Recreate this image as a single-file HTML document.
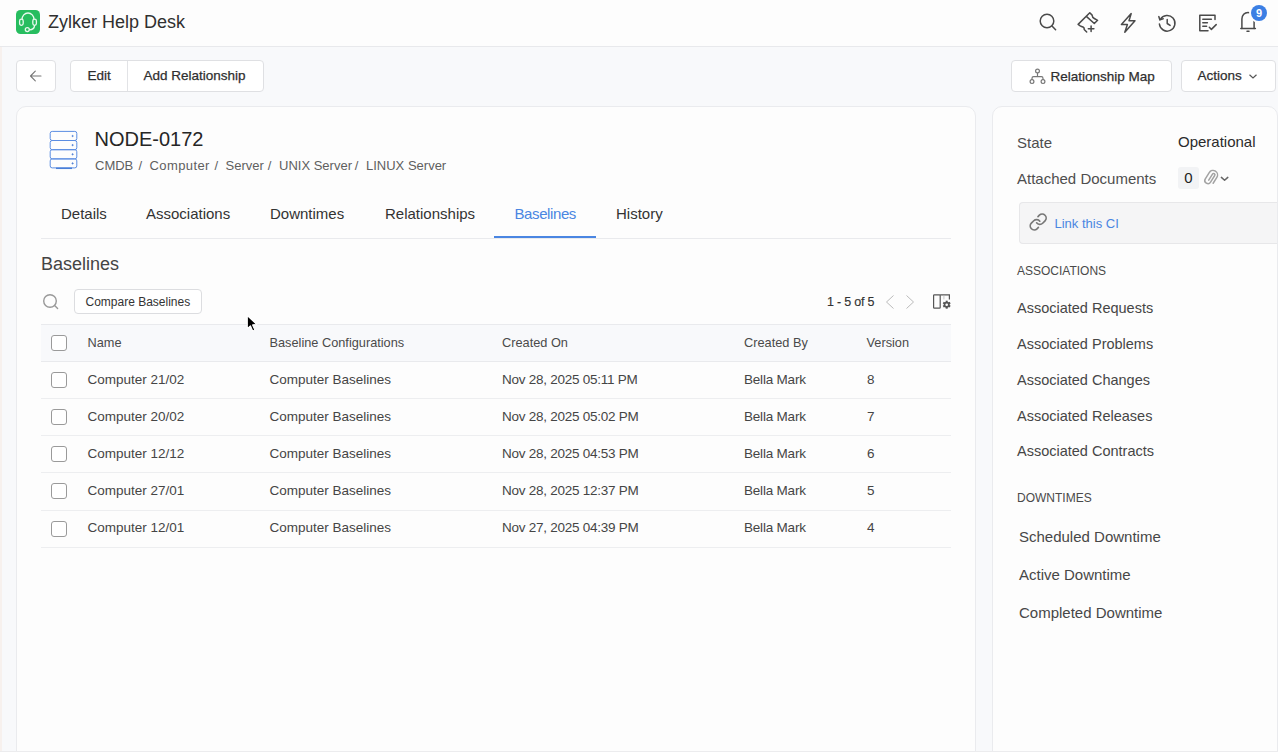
<!DOCTYPE html>
<html><head><meta charset="utf-8">
<style>
*{box-sizing:border-box;margin:0;padding:0}
html,body{width:1278px;height:752px;overflow:hidden}
body{background:#f8f9fb;font-family:"Liberation Sans",sans-serif;color:#333;position:relative}
.a{position:absolute;white-space:nowrap;line-height:1}
#hdr{position:absolute;left:0;top:0;width:1278px;height:47px;background:#fdfdfd;border-bottom:1px solid #e8e9ec}
.btn{position:absolute;background:#fff;border:1px solid #dfe0e3;border-radius:4px}
.bt{-webkit-text-stroke:0.25px #2f2f2f}
.card{position:absolute;background:#fdfdfd;border:1px solid #eaebee;border-radius:10px}
.ic{position:absolute;overflow:visible}
</style></head><body>
<div id="hdr"></div>
<!-- left strip -->
<div class="a" style="left:0;top:47px;width:2px;height:705px;background:#f7f1ee"></div>

<!-- logo -->
<svg class="ic" style="left:16px;top:10px" width="24" height="24" viewBox="0 0 24 24">
<rect x="0" y="0" width="24" height="24" rx="4.5" fill="#27bd5f"/>
<path d="M6 9.5 A6 6.5 0 0 1 18 9.5" fill="none" stroke="#e9f9ee" stroke-width="1.3"/>
<rect x="3.6" y="9.2" width="3.6" height="6.2" rx="1.8" fill="none" stroke="#e9f9ee" stroke-width="1.3"/>
<rect x="16.8" y="9.2" width="3.6" height="6.2" rx="1.8" fill="none" stroke="#e9f9ee" stroke-width="1.3"/>
<path d="M18.6 15.4 Q18.2 19.8 13.6 19.8" fill="none" stroke="#e9f9ee" stroke-width="1.3"/>
<circle cx="11.3" cy="19.6" r="2" fill="none" stroke="#e9f9ee" stroke-width="1.3"/>
</svg>
<div class="a" style="left:48px;top:13.1px;font-size:18px;color:#303030">Zylker Help Desk</div>

<!-- header icons -->
<svg class="ic" style="left:1034px;top:8px" width="28" height="28" viewBox="0 0 28 28" fill="none" stroke="#4a4a4a" stroke-width="1.5" stroke-linecap="round">
<circle cx="13" cy="13" r="6.8"/><path d="M18 18 L21.6 21.8"/>
</svg>
<svg class="ic" style="left:1074px;top:8px" width="28" height="28" viewBox="0 0 28 28" fill="none" stroke="#4a4a4a" stroke-width="1.5" stroke-linejoin="round" stroke-linecap="round">
<path d="M12.7 24 L10.2 21.5 Q10.7 19.9 9 19 Q7.4 18.6 6.2 17.9 L4.1 16.4 L15.8 4.8 L18.1 7.1 Q18.3 9.4 20.3 10.5 L23.6 12.3 L20.3 15.5 L12.9 8.9"/>
<path d="M17.1 18 V23.4 M14.3 20.7 H19.9"/>
</svg>
<svg class="ic" style="left:1116px;top:11px" width="24" height="24" viewBox="0 0 24 24" fill="none" stroke="#4a4a4a" stroke-width="1.5" stroke-linejoin="round">
<path d="M15.2 2.6 L5.4 13.4 L11.4 13.4 L8.8 21.2 L19 9.8 L13 9.8 Z"/>
</svg>
<svg class="ic" style="left:1155px;top:11px" width="24" height="24" viewBox="0 0 24 24" fill="none" stroke="#4a4a4a" stroke-width="1.5" stroke-linecap="round" stroke-linejoin="round">
<path d="M5.4 8.4 A7.8 7.8 0 1 1 4.4 13"/><path d="M3.8 5.6 L4.9 8.9 L8.2 7.8"/><path d="M12.2 8.4 V12.5 L15.1 14.4"/>
</svg>
<svg class="ic" style="left:1196px;top:11px" width="24" height="24" viewBox="0 0 24 24" fill="none" stroke="#4a4a4a" stroke-width="1.5" stroke-linecap="round" stroke-linejoin="round">
<path d="M19 8.6 V4.2 H3.8 V19.8 H12"/><path d="M6.8 8.2 H15.4 M6.8 11.8 H11.4 M6.8 15.2 H10.6"/><path d="M13.3 16.3 L15.4 18.4 L20.2 13.6"/>
</svg>
<svg class="ic" style="left:1234px;top:2px" width="40" height="36" viewBox="0 0 40 36" fill="none" stroke="#4a4a4a" stroke-width="1.5" stroke-linecap="round" stroke-linejoin="round">
<path d="M7.9 26.6 V17 A6.1 6.6 0 0 1 20.1 17 V26.6"/><path d="M6.8 26.6 H21.4"/><path d="M13 29.2 H15"/>
</svg>
<div class="a" style="left:1251px;top:5px;width:16px;height:16px;border-radius:50%;background:#3b7fe4;color:#fff;font-size:11px;font-weight:bold;line-height:16px;text-align:center;box-shadow:0 0 0 2px #fdfdfd">9</div>

<!-- toolbar -->
<div class="btn" style="left:16px;top:60px;width:40px;height:32px"></div>
<svg class="ic" style="left:28px;top:68px" width="16" height="16" viewBox="0 0 16 16" fill="none" stroke="#777" stroke-width="1.1" stroke-linecap="round" stroke-linejoin="round">
<path d="M13 8 H2.5 M7.3 3.2 L2.5 8 L7.3 12.8"/>
</svg>
<div class="btn" style="left:70px;top:60px;width:194px;height:32px"></div>
<div class="a" style="left:126.5px;top:61px;width:1px;height:30px;background:#e2e3e6"></div>
<div class="a bt" style="left:87.5px;top:69px;font-size:13.5px;color:#2f2f2f">Edit</div>
<div class="a bt" style="left:143.5px;top:69px;font-size:13.5px;color:#2f2f2f">Add Relationship</div>

<div class="btn" style="left:1011px;top:60px;width:161px;height:32px"></div>
<svg class="ic" style="left:1029px;top:68px" width="17" height="17" viewBox="0 0 17 17" fill="none" stroke="#777" stroke-width="1.2">
<circle cx="8.5" cy="3" r="1.9"/><circle cx="3" cy="13.6" r="1.9"/><circle cx="14" cy="13.6" r="1.9"/>
<path d="M8.5 4.9 V8.6 M3 11.7 V10.2 Q3 8.6 4.6 8.6 H12.4 Q14 8.6 14 10.2 V11.7"/>
</svg>
<div class="a bt" style="left:1050.5px;top:69.5px;font-size:13.5px;color:#2f2f2f">Relationship Map</div>
<div class="btn" style="left:1181px;top:60px;width:95px;height:32px"></div>
<div class="a bt" style="left:1197.5px;top:69px;font-size:13.5px;color:#2f2f2f">Actions</div>
<svg class="ic" style="left:1248px;top:73px" width="10" height="7" viewBox="0 0 10 7" fill="none" stroke="#555" stroke-width="1.2">
<path d="M1.5 1.8 L5 5 L8.5 1.8"/>
</svg>

<!-- main card -->
<div class="card" style="left:16px;top:106px;width:960px;height:700px"></div>
<!-- right card -->
<div class="card" style="left:992px;top:106px;width:286px;height:700px"></div>

<!-- server icon -->
<svg class="ic" style="left:49px;top:130px" width="30" height="40" viewBox="0 0 30 40" fill="none" stroke="#5b8de2" stroke-width="1">
<rect x="1.2" y="1.4" width="26.6" height="9.1" rx="2"/>
<rect x="1.2" y="10.5" width="26.6" height="9.2" rx="2"/>
<rect x="1.2" y="19.7" width="26.6" height="9.2" rx="2"/>
<rect x="1.2" y="28.9" width="26.6" height="9" rx="2"/>
<path d="M7 38.3 H23" stroke-width="1.5" stroke="#4a7fd8"/>
<circle cx="23.6" cy="6" r="0.6" fill="#3f5f9f"/><circle cx="23.6" cy="15.1" r="0.6" fill="#3f5f9f"/><circle cx="23.6" cy="24.3" r="0.6" fill="#3f5f9f"/><circle cx="23.6" cy="33.4" r="0.6" fill="#3f5f9f"/>
</svg>
<div class="a" style="left:94.5px;top:128.8px;font-size:20px;color:#262626">NODE-0172</div>
<div class="a" style="left:95px;top:159px;font-size:13px;color:#5f5f5f">CMDB</div><div class="a" style="left:138.4px;top:159px;font-size:13px;color:#5f5f5f">/</div><div class="a" style="left:149.5px;top:159px;font-size:13px;color:#5f5f5f;letter-spacing:0.4px">Computer</div><div class="a" style="left:214.5px;top:159px;font-size:13px;color:#5f5f5f">/</div><div class="a" style="left:225.5px;top:159px;font-size:13px;color:#5f5f5f">Server</div><div class="a" style="left:267.7px;top:159px;font-size:13px;color:#5f5f5f">/</div><div class="a" style="left:279px;top:159px;font-size:13px;color:#5f5f5f">UNIX Server</div><div class="a" style="left:354.7px;top:159px;font-size:13px;color:#5f5f5f">/</div><div class="a" style="left:366px;top:159px;font-size:13px;color:#5f5f5f">LINUX Server</div>
<!-- tabs -->
<div class="a" style="left:61px;top:206px;font-size:15px;color:#333">Details</div>
<div class="a" style="left:146px;top:206px;font-size:15px;color:#333">Associations</div>
<div class="a" style="left:270px;top:206px;font-size:15px;color:#333">Downtimes</div>
<div class="a" style="left:385px;top:206px;font-size:15px;color:#333">Relationships</div>
<div class="a" style="left:514.5px;top:206px;font-size:15px;color:#4a86e2;letter-spacing:-0.4px">Baselines</div>
<div class="a" style="left:616px;top:206px;font-size:15px;color:#333">History</div>
<div class="a" style="left:41px;top:238px;width:910px;height:1px;background:#e9eaed"></div>
<div class="a" style="left:494px;top:236px;width:102px;height:2px;background:#4a86e2"></div>

<div class="a" style="left:41px;top:255px;font-size:18px;color:#444">Baselines</div>
<svg class="ic" style="left:41px;top:292px" width="20" height="20" viewBox="0 0 20 20" fill="none" stroke="#999" stroke-width="1.4" stroke-linecap="round">
<circle cx="9" cy="9" r="6.3"/><path d="M13.6 13.6 L16.6 16.4"/>
</svg>
<div class="btn" style="left:74px;top:289px;width:128px;height:25px;border-radius:4px;border-color:#dcdde0"></div>
<div class="a" style="left:85.5px;top:295.5px;font-size:12px;color:#333">Compare Baselines</div>

<div class="a" style="left:827px;top:295.5px;font-size:12.5px;color:#333;letter-spacing:-0.2px;-webkit-text-stroke:0.15px #333">1 - 5 of 5</div>
<svg class="ic" style="left:884px;top:294px" width="32" height="16" viewBox="0 0 32 16" fill="none" stroke="#bbb" stroke-width="1">
<path d="M9.5 1.5 L2.5 8 L9.5 14.5 M22.5 1.5 L29.5 8 L22.5 14.5"/>
</svg>
<svg class="ic" style="left:930px;top:291px" width="24" height="20" viewBox="0 0 24 20" fill="none" stroke="#555" stroke-width="1.2">
<rect x="3.6" y="3.8" width="6.6" height="13.4" rx="0.8"/><path d="M10.2 3.8 H19.4 V8.6"/><path d="M13.9 4.4 V8.4" stroke="#bbb" stroke-width="0.8"/>
<g transform="translate(16.7,13.7)" fill="#555" stroke="none">
<rect x="-1" y="-4" width="2" height="8"/><rect x="-1" y="-4" width="2" height="8" transform="rotate(60)"/><rect x="-1" y="-4" width="2" height="8" transform="rotate(120)"/>
<circle r="3"/><circle r="1.3" fill="#fdfdfc"/></g>
</svg>

<!-- table -->
<div class="a" style="left:41px;top:324px;width:910px;height:38px;background:#f8f9fb;border-top:1px solid #e9eaed;border-bottom:1px solid #e9eaed"></div>
<div class="a" style="left:51px;top:335px;width:16px;height:16px;border:1.2px solid #9a9a9a;border-radius:3px;background:#fff"></div>
<div class="a" style="left:87.5px;top:337px;font-size:12.75px;color:#4a4a4a">Name</div>
<div class="a" style="left:269.5px;top:337px;font-size:12.75px;color:#4a4a4a">Baseline Configurations</div>
<div class="a" style="left:502px;top:337px;font-size:12.75px;color:#4a4a4a">Created On</div>
<div class="a" style="left:744px;top:337px;font-size:12.75px;color:#4a4a4a">Created By</div>
<div class="a" style="left:866.5px;top:337px;font-size:12.75px;color:#4a4a4a">Version</div>
<div class="a" style="left:41px;top:398.0px;width:910px;height:1px;background:#edeef0"></div>
<div class="a" style="left:51px;top:371.7px;width:16px;height:16px;border:1.2px solid #9a9a9a;border-radius:3px;background:#fff"></div>
<div class="a" style="left:87.5px;top:373.1px;font-size:13.5px;color:#454545">Computer 21/02</div>
<div class="a" style="left:269.5px;top:373.1px;font-size:13.5px;color:#454545">Computer Baselines</div>
<div class="a" style="left:502px;top:373.1px;font-size:13.5px;color:#454545;letter-spacing:-0.25px">Nov 28, 2025 05:11 PM</div>
<div class="a" style="left:744px;top:373.1px;font-size:13.5px;color:#454545;letter-spacing:-0.2px">Bella Mark</div>
<div class="a" style="left:867px;top:373.1px;font-size:13.5px;color:#454545">8</div>
<div class="a" style="left:41px;top:435.2px;width:910px;height:1px;background:#edeef0"></div>
<div class="a" style="left:51px;top:408.9px;width:16px;height:16px;border:1.2px solid #9a9a9a;border-radius:3px;background:#fff"></div>
<div class="a" style="left:87.5px;top:410.1px;font-size:13.5px;color:#454545">Computer 20/02</div>
<div class="a" style="left:269.5px;top:410.1px;font-size:13.5px;color:#454545">Computer Baselines</div>
<div class="a" style="left:502px;top:410.1px;font-size:13.5px;color:#454545;letter-spacing:-0.25px">Nov 28, 2025 05:02 PM</div>
<div class="a" style="left:744px;top:410.1px;font-size:13.5px;color:#454545;letter-spacing:-0.2px">Bella Mark</div>
<div class="a" style="left:867px;top:410.1px;font-size:13.5px;color:#454545">7</div>
<div class="a" style="left:41px;top:472.4px;width:910px;height:1px;background:#edeef0"></div>
<div class="a" style="left:51px;top:446.1px;width:16px;height:16px;border:1.2px solid #9a9a9a;border-radius:3px;background:#fff"></div>
<div class="a" style="left:87.5px;top:447.1px;font-size:13.5px;color:#454545">Computer 12/12</div>
<div class="a" style="left:269.5px;top:447.1px;font-size:13.5px;color:#454545">Computer Baselines</div>
<div class="a" style="left:502px;top:447.1px;font-size:13.5px;color:#454545;letter-spacing:-0.25px">Nov 28, 2025 04:53 PM</div>
<div class="a" style="left:744px;top:447.1px;font-size:13.5px;color:#454545;letter-spacing:-0.2px">Bella Mark</div>
<div class="a" style="left:867px;top:447.1px;font-size:13.5px;color:#454545">6</div>
<div class="a" style="left:41px;top:509.6px;width:910px;height:1px;background:#edeef0"></div>
<div class="a" style="left:51px;top:483.3px;width:16px;height:16px;border:1.2px solid #9a9a9a;border-radius:3px;background:#fff"></div>
<div class="a" style="left:87.5px;top:484.1px;font-size:13.5px;color:#454545">Computer 27/01</div>
<div class="a" style="left:269.5px;top:484.1px;font-size:13.5px;color:#454545">Computer Baselines</div>
<div class="a" style="left:502px;top:484.1px;font-size:13.5px;color:#454545;letter-spacing:-0.25px">Nov 28, 2025 12:37 PM</div>
<div class="a" style="left:744px;top:484.1px;font-size:13.5px;color:#454545;letter-spacing:-0.2px">Bella Mark</div>
<div class="a" style="left:867px;top:484.1px;font-size:13.5px;color:#454545">5</div>
<div class="a" style="left:41px;top:546.8px;width:910px;height:1px;background:#edeef0"></div>
<div class="a" style="left:51px;top:520.5px;width:16px;height:16px;border:1.2px solid #9a9a9a;border-radius:3px;background:#fff"></div>
<div class="a" style="left:87.5px;top:521.1px;font-size:13.5px;color:#454545">Computer 12/01</div>
<div class="a" style="left:269.5px;top:521.1px;font-size:13.5px;color:#454545">Computer Baselines</div>
<div class="a" style="left:502px;top:521.1px;font-size:13.5px;color:#454545;letter-spacing:-0.25px">Nov 27, 2025 04:39 PM</div>
<div class="a" style="left:744px;top:521.1px;font-size:13.5px;color:#454545;letter-spacing:-0.2px">Bella Mark</div>
<div class="a" style="left:867px;top:521.1px;font-size:13.5px;color:#454545">4</div>

<div class="a" style="left:1017px;top:135px;font-size:15px;color:#4e4e4e">State</div>
<div class="a" style="left:1178px;top:133.5px;font-size:15px;color:#2b2b2b">Operational</div>
<div class="a" style="left:1017px;top:171.3px;font-size:15px;color:#4e4e4e">Attached Documents</div>
<div class="a" style="left:1178px;top:167px;width:21px;height:22px;background:#f2f3f5;border-radius:3px;font-size:15px;line-height:22px;text-align:center;color:#222">0</div>
<svg class="ic" style="left:1200px;top:164px" width="34" height="28" viewBox="0 0 34 28" fill="none" stroke-linecap="round" stroke-linejoin="round">
<g transform="translate(11.6,13.8) rotate(32)" stroke="#a3a3a3" stroke-width="1.5"><path d="M-1.2 3.5 V-3.6 A1.3 1.3 0 0 1 1.4 -3.6 V4.2 A3.1 3.1 0 0 1 -4.8 4.2 V-3.2 A4.5 4.5 0 0 1 4.2 -3.2 V3.8"/></g>
<path d="M21.4 13.4 L24.6 16.3 L27.8 13.4" stroke="#666" stroke-width="1.5"/>
</svg>
<div class="a" style="left:1019px;top:202px;width:258px;height:41.5px;background:#f5f5f6;border:1px solid #e7e7e9;border-right:none;border-radius:4px 0 0 4px"></div>
<svg class="ic" style="left:1024px;top:208px" width="28" height="28" viewBox="0 0 28 28" fill="none" stroke="#777" stroke-width="2.1" stroke-linecap="round" stroke-linejoin="round">
<g transform="translate(4.6,4.4) scale(0.8)"><path d="M10 13a5 5 0 0 0 7.54.54l3-3a5 5 0 0 0-7.07-7.07l-1.72 1.71"/><path d="M14 11a5 5 0 0 0-7.54-.54l-3 3a5 5 0 0 0 7.07 7.07l1.71-1.71"/></g>
</svg>
<div class="a" style="left:1054.5px;top:216.8px;font-size:13px;color:#4a86e2">Link this CI</div>

<div class="a" style="left:1017px;top:265.4px;font-size:12px;color:#4a4a4a">ASSOCIATIONS</div>
<div class="a" style="left:1017px;top:300.6px;font-size:14.5px;color:#464646">Associated Requests</div>
<div class="a" style="left:1017px;top:336.9px;font-size:14.5px;color:#464646">Associated Problems</div>
<div class="a" style="left:1017px;top:372.8px;font-size:14.5px;color:#464646">Associated Changes</div>
<div class="a" style="left:1017px;top:408.7px;font-size:14.5px;color:#464646">Associated Releases</div>
<div class="a" style="left:1017px;top:444.3px;font-size:14.5px;color:#464646">Associated Contracts</div>
<div class="a" style="left:1017px;top:492.2px;font-size:12px;color:#4a4a4a">DOWNTIMES</div>
<div class="a" style="left:1019px;top:528.5px;font-size:15px;color:#474747">Scheduled Downtime</div>
<div class="a" style="left:1019px;top:566.5px;font-size:15px;color:#474747">Active Downtime</div>
<div class="a" style="left:1019px;top:604.5px;font-size:15px;color:#474747">Completed Downtime</div>

<!-- cursor -->
<svg class="ic" style="left:245px;top:313px" width="14" height="20" viewBox="0 0 14 20">
<path d="M2.3 2.5 L2.3 15.6 L5.4 12.8 L7.7 18 L9.9 17 L7.6 11.9 L11.8 11.6 Z" fill="#000" stroke="#fff" stroke-width="1.1" stroke-linejoin="round"/>
</svg>

<div class="a" style="left:0;top:751px;width:1278px;height:1px;background:#ececee"></div>
</body></html>
